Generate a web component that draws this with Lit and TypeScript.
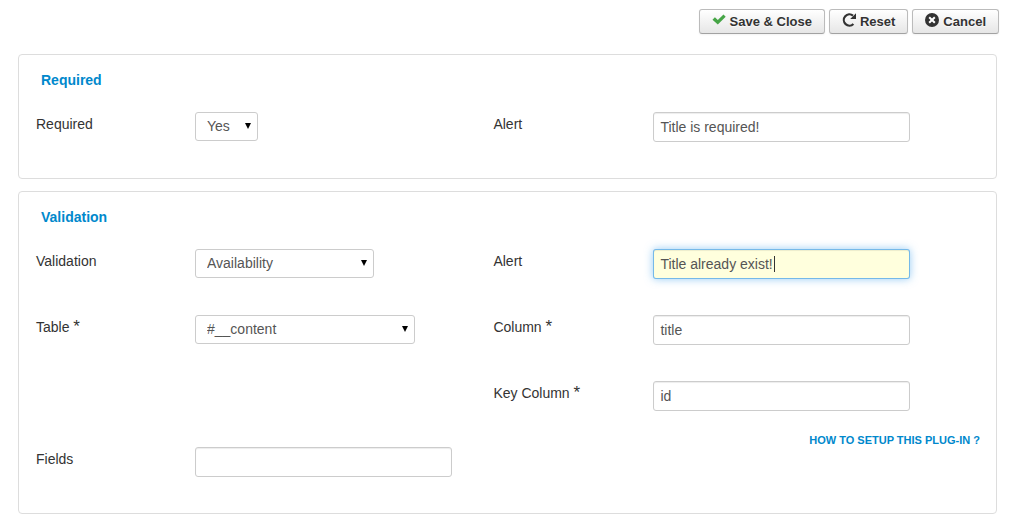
import { LitElement, html, css, svg } from "lit";
import { customElement } from "lit/decorators.js";

const checkIcon = svg`<path fill="#46a546" d="M0.5 6.7 2.9 4.3 5.8 7.1 11.5 1.5 13.7 3.7 5.8 11.6Z"/>`;
const resetIcon = svg`
  <path fill="none" stroke="#333" stroke-width="2.2" d="M11.4 11A5.6 5.6 0 1 1 11 2.7"/>
  <path fill="#333" d="M14 0.2V6H8.2Z"/>`;
const cancelIcon = svg`
  <circle cx="7" cy="7" r="7" fill="#333"/>
  <path stroke="#fff" stroke-width="2" d="M4.2 4.2 9.8 9.8M9.8 4.2 4.2 9.8"/>`;

@customElement("app-root")
export class AppRoot extends LitElement {
  static styles = css`
    :host {
      display: block;
      padding: 9px 18px 16px;
      background: #fff;
      color: #333;
      font: 14px/20px "Liberation Sans", Arial, sans-serif;
    }
    * {
      box-sizing: border-box;
    }
    .toolbar {
      display: flex;
      justify-content: flex-end;
      gap: 4px;
      margin-bottom: 20px;
    }
    .btn {
      display: flex;
      align-items: center;
      gap: 4px;
      height: 25px;
      padding: 0 12px;
      border: 1px solid #bbb;
      border-bottom-color: #a2a2a2;
      border-radius: 3px;
      background: linear-gradient(#fff, #e6e6e6);
      box-shadow: inset 0 1px 0 rgba(255, 255, 255, 0.2), 0 1px 2px rgba(0, 0, 0, 0.05);
      color: #333;
      font: bold 13px/18px "Liberation Sans", Arial, sans-serif;
      text-shadow: 0 1px 1px rgba(255, 255, 255, 0.75);
    }
    .icon {
      width: 14px;
      height: 14px;
      margin-bottom: 3px;
    }
    .panels {
      display: flex;
      flex-direction: column;
      gap: 12px;
      margin-right: 2px;
    }
    .panel {
      padding: 15px 16px 0 17px;
      border: 1px solid #ddd;
      border-radius: 4px;
    }
    .title {
      margin: 0 0 22px;
      padding-left: 5px;
      color: #08c;
      font-size: 14px;
      line-height: 20px;
    }
    .grid {
      display: grid;
      grid-template-columns: 94fr 100fr;
    }
    .cell {
      display: flex;
      flex-direction: column;
      height: 66px;
    }
    .left {
      grid-column: 1;
    }
    .field {
      display: flex;
      align-items: flex-start;
    }
    .label {
      flex: none;
      width: 160px;
      padding-top: 2px;
    }
    .left .label {
      width: 159px;
    }
    .star {
      font-size: 17px;
      line-height: 20px;
    }
    .input,
    .select {
      border: 1px solid #ccc;
      border-radius: 3px;
      background-color: #fff;
      color: #555;
      font: 14px/20px "Liberation Sans", Arial, sans-serif;
    }
    .input {
      flex: 0 1 257px;
      min-width: 0;
      height: 30px;
      padding: 4px 6px;
      box-shadow: inset 0 1px 1px rgba(0, 0, 0, 0.075);
      outline: 0;
    }
    .active {
      border-color: rgba(82, 168, 236, 0.8);
      background: #ffffdd linear-gradient(#333, #333) no-repeat 120px center / 1px 16px;
      box-shadow: inset 0 1px 1px rgba(0, 0, 0, 0.075), 0 0 8px rgba(82, 168, 236, 0.6);
    }
    .select {
      appearance: none;
      height: 29px;
      padding: 0 26px 1px 11px;
      background-image: url("data:image/svg+xml,%3Csvg xmlns='http://www.w3.org/2000/svg' width='6' height='6'%3E%3Cpath d='M0 0H6L3 6Z'/%3E%3C/svg%3E");
      background-repeat: no-repeat;
      background-position: right 6px top 10px;
    }
    .small {
      width: 63px;
    }
    .medium {
      width: 179px;
    }
    .large {
      width: 220px;
    }
    .help {
      align-self: flex-end;
      margin-top: 22px;
      color: #08c;
      font-size: 11px;
      font-weight: bold;
      line-height: 14px;
      text-decoration: none;
      text-transform: uppercase;
    }
  `;

  firstUpdated() {
    const input = this.renderRoot.querySelector<HTMLInputElement>("#valid-alert");
    input?.focus();
    input?.setSelectionRange(input.value.length, input.value.length);
  }

  private button(icon: unknown, text: string) {
    return html`<button class="btn" type="button">
      <svg class="icon" viewBox="0 0 14 14" aria-hidden="true">${icon}</svg>${text}
    </button>`;
  }

  private label(id: string, text: string, required = false) {
    return html`<label class="label" for=${id}
      >${text}${required ? html` <span class="star">*</span>` : ""}</label
    >`;
  }

  private text(id: string, label: string, value: string, required = false, active = false) {
    return html`<div class="field">
      ${this.label(id, label, required)}
      <input class="input ${active ? "active" : ""}" id=${id} type="text" .value=${value} />
    </div>`;
  }

  private choice(id: string, label: string, value: string, size: string, required = false) {
    return html`<div class="field">
      ${this.label(id, label, required)}
      <select class="select ${size}" id=${id}><option>${value}</option></select>
    </div>`;
  }

  render() {
    return html`
      <div class="toolbar">
        ${this.button(checkIcon, "Save & Close")}
        ${this.button(resetIcon, "Reset")}
        ${this.button(cancelIcon, "Cancel")}
      </div>
      <div class="panels">
        <section class="panel">
          <h2 class="title">Required</h2>
          <div class="grid">
            <div class="cell left">${this.choice("required", "Required", "Yes", "small")}</div>
            <div class="cell">${this.text("required-alert", "Alert", "Title is required!")}</div>
          </div>
        </section>
        <section class="panel">
          <h2 class="title">Validation</h2>
          <div class="grid">
            <div class="cell left">${this.choice("validation", "Validation", "Availability", "medium")}</div>
            <div class="cell">${this.text("valid-alert", "Alert", "Title already exist!", false, true)}</div>
            <div class="cell left">${this.choice("table", "Table", "#__content", "large", true)}</div>
            <div class="cell">${this.text("column", "Column", "title", true)}</div>
            <div class="cell left"></div>
            <div class="cell">
              ${this.text("key-column", "Key Column", "id", true)}
              <a class="help" href="#">How to setup this plug-in ?</a>
            </div>
            <div class="cell left">${this.text("fields", "Fields", "")}</div>
          </div>
        </section>
      </div>
    `;
  }
}
